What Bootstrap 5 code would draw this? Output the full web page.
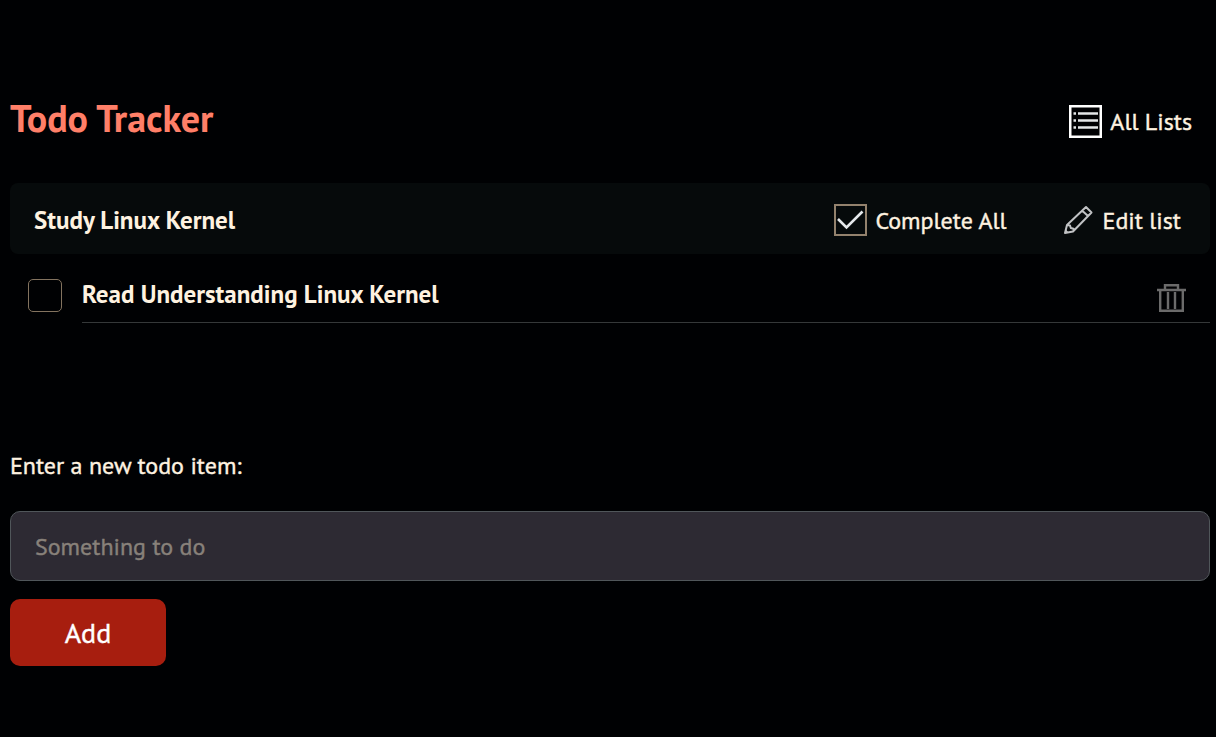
<!DOCTYPE html>
<html lang="en" data-bs-theme="dark">
<head>
<meta charset="utf-8">
<meta name="viewport" content="width=device-width, initial-scale=1">
<title>Todo Tracker</title>
<link href="https://cdn.jsdelivr.net/npm/bootstrap@5.3.0/dist/css/bootstrap.min.css" rel="stylesheet">
<style>
  body { background: #000103; color: #fef2e0; font-family: "PT Sans", Lato, "Noto Sans", sans-serif; font-size: 24px; line-height: 32px; -webkit-text-stroke: .4px; }
  .page { padding: 88px 6px 64px 10px; }
  .brand { color: #ff7f68; font-size: 38px; line-height: 60px; }
  .fw-bold { -webkit-text-stroke: 0; }
  .action { color: inherit; gap: 8px; font-weight: inherit; text-decoration: none; }
  .action:hover { color: #fff; }
  .site-header { padding-right: 18px; margin-bottom: 35px; }
  .site-header .action { padding-top: 6px; }
  .action span { padding-top: 2px; }
  .list-bar { background: #060a0b; border-radius: 8px; min-height: 71px; padding: 2px 29px 0 24px; }
  .list-bar h2, .todo-name { color: inherit; font-size: 25px; line-height: 32px; }
  .list-actions { gap: 56px; }
  .todo { padding-left: 18px; gap: 20px; }
  .todo .form-check-input { width: 34px; height: 33px; margin: 0 0 11px; background-color: #000103; border: 1px solid #83735f; border-radius: 5px; }
  .todo .form-check-input:checked { background-color: #a71e0f; }
  .todo-body { border-bottom: 1px solid #353839; min-height: 69px; padding: 12px 24px 0 0; }
  .todo-body button { padding-top: 8px; }
  .entry { margin-top: 127px; }
  .entry-label { margin-bottom: 29px; }
  .entry-input { height: 70px; padding: 0 24px; border: 1px solid #50565a; border-radius: 10px; background: #2d2a33; color: #fef2e0; font-size: 24px; }
  .entry-input:focus { background: #2d2a33; }
  .entry-input::placeholder { color: #88817a; opacity: 1; }
  .add-btn { width: 156px; height: 67px; margin-top: 18px; border-radius: 10px; background: #a71e0f; color: #fff; font-size: 28px; }
  .add-btn:hover { background: #bd2817; color: #fff; }
</style>
</head>
<body>
<main class="container-fluid page">
  <header class="site-header d-flex justify-content-between align-items-center">
    <h1 class="brand fw-bold mb-0">Todo Tracker</h1>
    <a class="action d-flex align-items-center" href="#lists">
      <svg width="33" height="33" viewBox="0 0 33 33" fill="none" aria-hidden="true">
        <path d="M1.250 1.250h30.500v30.500H1.250z" stroke="#fff" stroke-width="2.500"/>
        <path d="M4.500 8.500h2.500m2 0h20M4.500 15.500h2.500m2 0h20M4.500 22.500h2.500m2 0h20" stroke="#e5e7e9" stroke-width="2.400"/>
      </svg>
      <span>All Lists</span>
    </a>
  </header>

  <section>
    <div class="list-bar d-flex justify-content-between align-items-center">
      <h2 class="fw-bold mb-0">Study Linux Kernel</h2>
      <div class="list-actions d-flex">
        <button type="button" class="action d-flex align-items-center border-0 bg-transparent p-0">
          <svg width="33" height="32" viewBox="0 0 33 32" fill="none" aria-hidden="true">
            <path d="M1 1h31v30H1z" stroke="#93826d" stroke-width="2"/>
            <path d="M4 15l8.500 8.500L28.500 7.500" stroke="#e5e8eb" stroke-width="2.600"/>
          </svg>
          <span>Complete All</span>
        </button>
        <a class="action d-flex align-items-center" href="#edit">
          <svg width="32" height="30" viewBox="0 0 32 30" fill="none" stroke="#c0c2c4" stroke-width="2" stroke-linejoin="round" aria-hidden="true">
            <path d="M2 28l2-8L23 2l5.500 5.500L10 26.500zM4 20l3 .5 .8 2.500 2.700 .8v2.500M19 5.500l6 5.500"/>
            <path d="M2 28l.8-3.500 2.700 2.700z" fill="#c0c2c4" stroke="none"/>
          </svg>
          <span>Edit list</span>
        </a>
      </div>
    </div>
    <ul class="list-unstyled mb-0">
      <li class="todo d-flex align-items-end">
        <input class="form-check-input flex-shrink-0" type="checkbox" id="todo-1">
        <div class="todo-body flex-grow-1 d-flex justify-content-between align-items-center">
          <label class="todo-name fw-bold" for="todo-1">Read Understanding Linux Kernel</label>
          <button type="button" class="border-0 bg-transparent px-0 pb-0 d-flex" aria-label="Delete item">
            <svg width="29" height="28" viewBox="0 0 29 28" fill="none" stroke="#6b6b6b" stroke-width="2.400" aria-hidden="true">
              <path d="M0 6h29M8 6V1.200h13V6M3.200 6v20.800h22.600V6M11 8v17M18 8v17"/>
            </svg>
          </button>
        </div>
      </li>
    </ul>
  </section>

  <form class="entry">
    <label class="entry-label d-block" for="new-item">Enter a new todo item:</label>
    <input class="form-control entry-input" type="text" id="new-item" placeholder="Something to do">
    <button type="button" class="btn add-btn border-0">Add</button>
  </form>
</main>
<script src="https://cdn.jsdelivr.net/npm/bootstrap@5.3.0/dist/js/bootstrap.bundle.min.js"></script>
</body>
</html>
